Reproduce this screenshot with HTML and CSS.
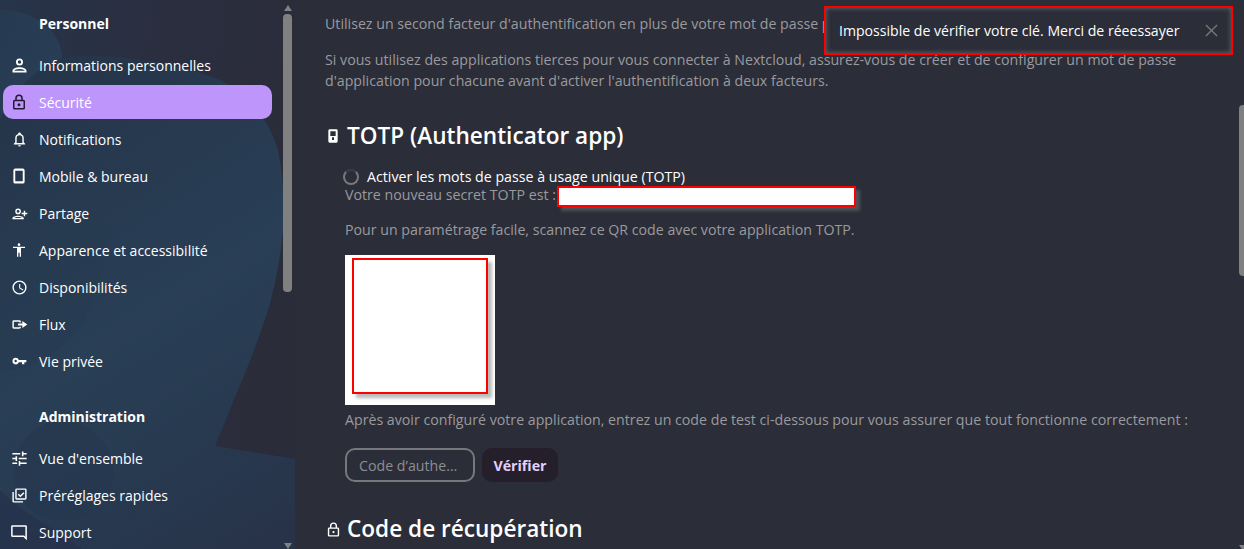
FILE: index.html
```html
<!DOCTYPE html>
<html lang="fr">
<head>
<meta charset="utf-8">
<title>Sécurité</title>
<link rel="stylesheet" href="styles.css">
</head>
<body>
<div class="app">
  <nav class="side">
    <svg class="side-bg" viewBox="0 0 295 549" preserveAspectRatio="none" aria-hidden="true">
      <defs>
        <linearGradient id="base" x1="0" y1="0" x2="1" y2="0.2">
          <stop offset="0" stop-color="#27344a"/>
          <stop offset="0.55" stop-color="#2a2e3f"/>
          <stop offset="1" stop-color="#2a2c3a"/>
        </linearGradient>
        <linearGradient id="blue" gradientUnits="userSpaceOnUse" x1="0" y1="110" x2="270" y2="540">
          <stop offset="0" stop-color="#25354a"/>
          <stop offset="0.5" stop-color="#293f56"/>
          <stop offset="0.78" stop-color="#27394f"/>
          <stop offset="1" stop-color="#283349"/>
        </linearGradient>
        <linearGradient id="lobe" x1="0" y1="0" x2="1" y2="1">
          <stop offset="0" stop-color="#263a50"/>
          <stop offset="1" stop-color="#2a3f58"/>
        </linearGradient>
      </defs>
      <rect width="295" height="549" fill="url(#base)"/>
      <path d="M0 10 C20 9 40 18 52 32 C60 42 62 50 62 58 C30 75 10 95 0 120 Z" fill="url(#lobe)"/>
      <path d="M0 120 C10 95 30 72 62 58 C100 52 170 60 220 80 C255 98 270 125 277 147 C284 175 285 215 282 240 C278 270 275 285 268 310 C258 340 250 362 240 385 L215 446 L295 459 L295 549 L0 549 Z" fill="url(#blue)"/>
      <path d="M0 228 C40 226 80 224 113 224 C105 262 95 290 85 320 C60 360 20 370 0 372 Z" fill="#273b50" opacity=".55"/>
      <circle cx="63" cy="471" r="50" fill="#25384e" opacity=".7"/>
      <path d="M0 490 C30 520 60 530 82 549 L0 549 Z" fill="#27304a" opacity=".7"/>
    </svg>
    <div class="side-list">
      <h3 class="side-head">Personnel</h3>
      <a class="item"><svg class="ic w21" viewBox="0 0 24 24"><path d="M12 4a4 4 0 1 1 0 8 4 4 0 0 1 0-8zm0 2a2 2 0 1 0 0 4 2 2 0 0 0 0-4zm0 8c4 0 8 1.800 8 4v2H4v-2c0-2.200 4-4 8-4zm0 2c-3.300 0-6 1.100-6 2h12c0-.9-2.700-2-6-2z"/></svg><span class="lbl">Informations personnelles</span></a>
      <a class="item active"><svg class="ic w18" viewBox="0 0 24 24"><path fill-rule="evenodd" d="M12 2a5 5 0 0 1 5 5v2h1a2 2 0 0 1 2 2v9a2 2 0 0 1-2 2H6a2 2 0 0 1-2-2v-9a2 2 0 0 1 2-2h1V7a5 5 0 0 1 5-5zm0 2a3 3 0 0 0-3 3v2h6V7a3 3 0 0 0-3-3zM6 11v9h12v-9H6zm6 2.500a2 2 0 1 1 0 4 2 2 0 0 1 0-4z"/></svg><span class="lbl">Sécurité</span></a>
      <a class="item"><svg class="ic w17" viewBox="0 0 24 24"><path fill-rule="evenodd" d="M12 2a2 2 0 0 1 2 2v.3A6 6 0 0 1 18 10v6l2 2v1H4v-1l2-2v-6a6 6 0 0 1 4-5.700V4a2 2 0 0 1 2-2zm0 4a4 4 0 0 0-4 4v7h8v-7a4 4 0 0 0-4-4zM10 20h4a2 2 0 0 1-4 0z"/></svg><span class="lbl">Notifications</span></a>
      <a class="item"><svg class="ic w18" viewBox="0 0 24 24"><path fill-rule="evenodd" d="M7 2h10a2.500 2.500 0 0 1 2.500 2.500v15A2.500 2.500 0 0 1 17 22H7a2.500 2.500 0 0 1-2.500-2.500v-15A2.500 2.500 0 0 1 7 2zm0 3v14h10V5H7z"/></svg><span class="lbl">Mobile &amp; bureau</span></a>
      <a class="item"><svg class="ic w17" viewBox="0 0 24 24"><path fill-rule="evenodd" d="M10 5a4 4 0 1 1 0 8 4 4 0 0 1 0-8zm0 2a2 2 0 1 0 0 4 2 2 0 0 0 0-4zm0 8c3.500 0 8 1.500 8 3.500V20H2v-1.500C2 16.500 6.500 15 10 15zm0 2c-2.800 0-5.500 1-6 1.300h12c-.5-.3-3.200-1.300-6-1.300zM18 8h2v3h3v2h-3v3h-2v-3h-3v-2h3V8z"/></svg><span class="lbl">Partage</span></a>
      <a class="item"><svg class="ic w16" viewBox="0 0 24 24"><path d="M12 2a2 2 0 1 1 0 4 2 2 0 0 1 0-4zm9 7h-6v13h-2v-6h-2v6H9V9H3V7h18v2z"/></svg><span class="lbl">Apparence et accessibilité</span></a>
      <a class="item"><svg class="ic w17" viewBox="0 0 24 24"><path fill-rule="evenodd" d="M12 2a10 10 0 1 1 0 20 10 10 0 0 1 0-20zm0 2a8 8 0 1 0 0 16 8 8 0 0 0 0-16zm-.5 3H13v5.200l4.500 2.700-.8 1.200L11.500 13V7z"/></svg><span class="lbl">Disponibilités</span></a>
      <a class="item"><svg class="ic w17" viewBox="0 0 24 24"><path d="M4 6h8a2 2 0 0 1 2 2v1h-2V8H4v8h8v-1h2v1a2 2 0 0 1-2 2H4a2 2 0 0 1-2-2V8a2 2 0 0 1 2-2zm6 4.500h6V7l7 5-7 5v-3.500h-6v-3z"/></svg><span class="lbl">Flux</span></a>
      <a class="item"><svg class="ic w16" viewBox="0 0 24 24"><path fill-rule="evenodd" d="M7 7a5 5 0 0 1 4.800 3.500H23V14h-3v3h-3.500v-3h-4.700A5 5 0 1 1 7 7zm0 3.200a1.800 1.800 0 1 0 0 3.600 1.800 1.800 0 0 0 0-3.600z"/></svg><span class="lbl">Vie privée</span></a>
      <h3 class="side-head second">Administration</h3>
      <a class="item"><svg class="ic w19" viewBox="0 0 24 24"><path d="M3 17v2h6v-2H3zM3 5v2h10V5H3zm10 16v-2h8v-2h-8v-2h-2v6h2zM7 9v2H3v2h4v2h2V9H7zm14 4v-2H11v2h10zm-6-4h2V7h4V5h-4V3h-2v6z"/></svg><span class="lbl">Vue d'ensemble</span></a>
      <a class="item"><svg class="ic w17" viewBox="0 0 24 24"><path fill-rule="evenodd" d="M2 7h2v13h13v2H4a2 2 0 0 1-2-2V7zm6-5h12a2 2 0 0 1 2 2v12a2 2 0 0 1-2 2H8a2 2 0 0 1-2-2V4a2 2 0 0 1 2-2zm0 2v12h12V4H8zm3 5.500 2.200 2.200L17.500 7.400 19 8.800l-5.800 5.800L9.600 11 11 9.500z"/></svg><span class="lbl">Préréglages rapides</span></a>
      <a class="item"><svg class="ic w18" viewBox="0 0 24 24"><path fill-rule="evenodd" d="M3 3h18a1.500 1.500 0 0 1 1.500 1.500V23L18 18.500H3A1.500 1.500 0 0 1 1.500 17V4.500A1.500 1.500 0 0 1 3 3zm.5 2v11.500h15.300l1.700 1.700V5h-17z"/></svg><span class="lbl">Support</span></a>
    </div>
    <div class="side-scroll" aria-hidden="true">
      <span class="arrow up"></span>
      <span class="thumb"></span>
      <span class="arrow down"></span>
    </div>
  </nav>

  <main class="main">
    <p class="txt first">Utilisez un second facteur d'authentification en plus de votre mot de passe pour vous connecter.</p>
    <p class="txt para">Si vous utilisez des applications tierces pour vous connecter à Nextcloud, assurez-vous de créer et de configurer un mot de passe d'application pour chacune avant d'activer l'authentification à deux facteurs.</p>

    <h2 class="section-title totp"><svg class="h-ic" viewBox="0 0 24 24"><path fill-rule="evenodd" d="M7 2h10a2 2 0 0 1 2 2v16a2 2 0 0 1-2 2H7a2 2 0 0 1-2-2V4a2 2 0 0 1 2-2zm1 3v7h8V5H8zm2.500 9v4h3v-4h-3z"/></svg>TOTP (Authenticator app)</h2>

    <div class="sub">
      <div class="check"><span class="spin"></span>Activer les mots de passe à usage unique (TOTP)</div>
      <div class="secret">Votre nouveau secret TOTP est :<span class="mask"></span></div>
      <p class="hint">Pour un paramétrage facile, scannez ce QR code avec votre application TOTP.</p>
      <div class="qr"><div class="qr-mask"></div></div>
      <p class="after">Après avoir configuré votre application, entrez un code de test ci-dessous pour vous assurer que tout fonctionne correctement :</p>
      <form class="verify">
        <input class="code" placeholder="Code d’authentification">
        <button class="btn" type="button">Vérifier</button>
      </form>
    </div>

    <h2 class="section-title rec"><svg class="h-ic lock" viewBox="0 0 24 24"><path fill-rule="evenodd" d="M12 2a5 5 0 0 1 5 5v2h1a2 2 0 0 1 2 2v9a2 2 0 0 1-2 2H6a2 2 0 0 1-2-2v-9a2 2 0 0 1 2-2h1V7a5 5 0 0 1 5-5zm0 2a3 3 0 0 0-3 3v2h6V7a3 3 0 0 0-3-3zM6 11v9h12v-9H6zm6 3a1.600 1.600 0 1 1 0 3.200 1.600 1.600 0 0 1 0-3.200z"/></svg>Code de récupération</h2>
  </main>

  <div class="main-scroll" aria-hidden="true">
    <span class="main-thumb"></span>
    <span class="main-arrow"></span>
  </div>

  <div class="toast">
    <span class="toast-msg">Impossible de vérifier votre clé. Merci de réeessayer</span>
    <svg class="toast-x" viewBox="0 0 14 14"><path d="M1 1l12 12M13 1L1 13"/></svg>
  </div>
</div>
</body>
</html>
```
FILE: styles.css
```css
* { box-sizing: border-box; }
html, body { margin: 0; height: 100%; overflow: hidden; }
body {
  background: #2b2d38;
  font-family: "Open Sans", "Noto Sans", sans-serif;
  font-size: 14px;
  color: #fff;
}
.app { display: flex; height: 549px; position: relative; overflow: hidden; }

.side { width: 295px; flex: none; position: relative; overflow: hidden; display: flex; }
.side-bg { position: absolute; inset: 0; width: 100%; height: 100%; }
.side-list { position: relative; width: 283px; flex: none; padding: 0 11px 0 3px; display: flex; flex-direction: column; gap: 3px; }
.side-head { margin: 0; padding: 14px 0 0 36px; height: 46px; font-size: 14px; font-weight: 700; line-height: 20px; }
.side-head.second { margin-top: 19px; padding-top: 7px; height: 38px; }
.item { display: grid; grid-template-columns: 32px 1fr; column-gap: 4px; align-items: center; height: 34px; border-radius: 10px; font-size: 14px; color: #fff; flex: none; }
.lbl { padding-top: 2px; line-height: 20px; }
.ic { justify-self: center; fill: #fff; }
.w16 { width: 16px; height: 16px; }
.w17 { width: 17px; height: 17px; }
.w18 { width: 18px; height: 18px; }
.w19 { width: 19px; height: 19px; }
.w21 { width: 21px; height: 21px; }
.active { background: #be95fa; }
.active .ic { fill: #241a36; }

.side-scroll { position: relative; width: 9px; flex: none; display: flex; flex-direction: column; align-items: center; }
.thumb { width: 9px; height: 278px; margin-top: 3px; background: #808080; border-radius: 4px; }
.arrow { width: 0; height: 0; border-left: 4.500px solid transparent; border-right: 4.500px solid transparent; }
.arrow.up { margin-top: 3px; border-bottom: 6px solid #808080; height: 8px; }
.arrow.down { margin-top: auto; border-top: 6px solid #808080; height: 6px; }

.main { flex: 1; min-width: 0; padding: 0 0 0 30px; color: #9a9a9e; font-size: 14.200px; }
.txt { margin: 0; line-height: 21px; }
.first { padding-top: 13px; white-space: nowrap; }
.para { margin-top: 15px; width: 880px; }
.section-title { margin: 0; color: #fff; font-size: 22.600px; font-weight: 600; line-height: 30px; display: flex; align-items: center; }
.totp { margin-top: 30px; }
.rec { margin-top: 32px; }
.h-ic { width: 16px; height: 16px; fill: #fff; margin-right: 6px; flex: none; }
.h-ic.lock { width: 17px; height: 17px; margin-right: 5px; }
.sub { padding-left: 20px; margin-top: 16px; }
.check { color: #fff; display: flex; align-items: center; line-height: 20px; height: 20px; margin-left: -2px; }
.spin { width: 16px; height: 16px; margin-right: 8px; border: 2px solid #77787e; border-top-color: #3b3d48; border-radius: 50%; flex: none; }
.secret { line-height: 20px; height: 20px; margin-top: -2px; display: flex; align-items: center; white-space: pre; }
.mask { display: block; width: 299px; height: 21px; background: #fff; border: 2px solid #f00; margin: 3px 0 0 1px; box-shadow: 4px 4px 3px rgba(120,120,120,.5); }
.hint { margin: 14px 0 0; line-height: 21px; }
.qr { margin-top: 15px; width: 150px; height: 150px; background: #fff; padding: 3px 0 0 7px; }
.qr-mask { width: 136px; height: 136px; background: #fff; border: 2px solid #f00; box-shadow: 4px 4px 3px rgba(120,120,120,.5); }
.after { margin: 4px 0 0; line-height: 21px; }
.verify { display: flex; gap: 7px; margin-top: 18px; }
.code { width: 130px; height: 34px; padding: 0 12px; border: 2px solid #77787e; border-radius: 10px; background: transparent; color: #fff; font: inherit; outline: none; text-overflow: ellipsis; }
.code::placeholder { color: #8d8d92; opacity: 1; }
.btn { height: 34px; width: 76px; border: 0; border-radius: 10px; background: #241f2b; color: #e3d0fc; font: inherit; font-weight: 700; padding: 0; }

.main-scroll { position: absolute; right: 0; top: 0; width: 5px; height: 549px; overflow: hidden; }
.main-thumb { position: absolute; left: 0; top: 105px; width: 9px; height: 171px; background: #808080; border-radius: 4px; }
.main-arrow { position: absolute; left: 0; top: 545px; width: 0; height: 0; border-left: 4.500px solid transparent; border-right: 4.500px solid transparent; border-top: 6px solid #808080; }

.toast {
  position: absolute; left: 824px; top: 6px; width: 409px; height: 49px;
  border: 2px solid #f00; background: #2b2d38;
  display: flex; align-items: center; padding: 0 13px 0 13px;
  box-shadow: inset 0 0 5px rgba(160,160,160,.5);
}
.toast-msg { flex: 1; font-size: 14.100px; color: #fff; white-space: nowrap; }
.toast-x { width: 13px; height: 13px; stroke: #777; stroke-width: 1.500; fill: none; }
```
